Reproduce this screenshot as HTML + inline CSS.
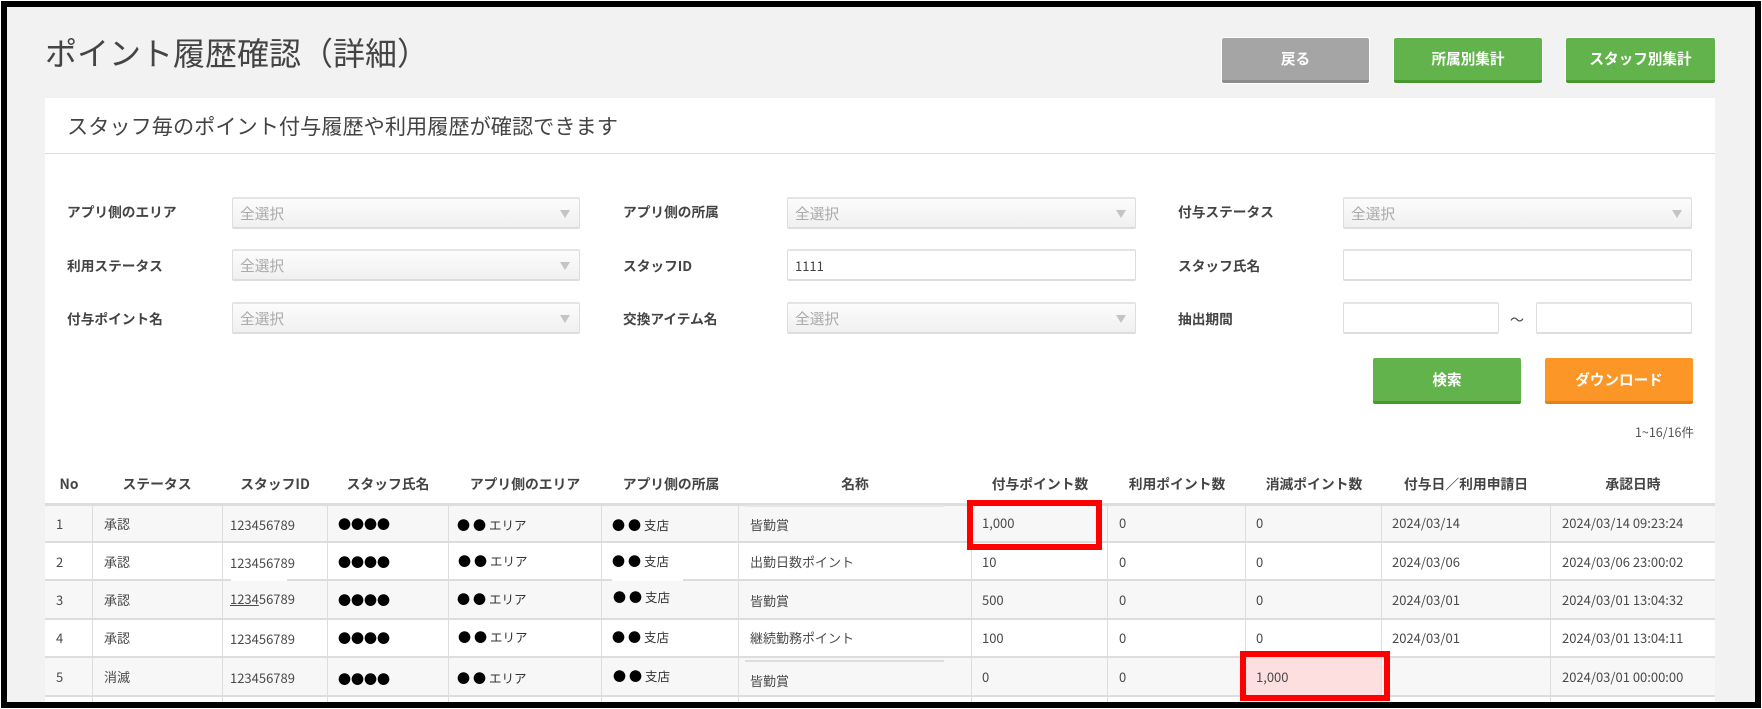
<!DOCTYPE html>
<html lang="ja"><head><meta charset="utf-8"><title>ポイント履歴確認（詳細）</title>
<style>
html,body{margin:0;padding:0;background:#fff}
#p{position:relative;width:1762px;height:709px;overflow:hidden;background:#fff;font-family:"Noto Sans CJK JP","Liberation Sans",sans-serif;color:#444}
#p div,#p span.a{position:absolute}
.t{white-space:nowrap;line-height:20px;font-size:13px;color:#4a4a4a}
.h{white-space:nowrap;line-height:20px;font-size:13.8px;font-weight:700;color:#444;transform:translateX(-50%)}
.l{white-space:nowrap;line-height:20px;font-size:13.7px;font-weight:700;color:#444}
.b{box-sizing:border-box;height:32px;border:1px solid #ddd;border-bottom:2px solid #ddd;border-top:2px solid #e4e4e4;border-radius:2px;background:#fff}
.s{background:linear-gradient(#fcfcfc,#f0f0f0)}
.s span{position:absolute;left:7px;top:4px;line-height:22px;font-size:14.7px;color:#aaa}
.s i{position:absolute;right:9px;top:11px;width:0;height:0;border-left:5.5px solid transparent;border-right:5.5px solid transparent;border-top:8px solid #c4c4c4}
.btn{box-sizing:border-box;text-align:center;color:#fff;font-weight:700;font-size:14.6px;border-radius:2px;border-bottom:3px solid;box-shadow:0 0 0 1px #fff}
.rl{left:45px;width:1670px;height:2px;background:#ddd}
.cl{top:505px;width:1px;height:197px;background:#ddd}
.d{color:#000;font-weight:700;font-size:13px}
.k{color:#000;font-size:13px;letter-spacing:3px}
.k small{font-size:12.5px;font-weight:400;color:#333;letter-spacing:0}
</style></head><body><div id="p">
<div style="left:1px;top:1px;width:1760px;height:707px;background:#000"></div>
<div style="left:7px;top:7px;width:1748px;height:695px;background:#f2f2f2;overflow:hidden"></div>

<div class="t" style="left:45px;top:32px;font-size:32px;line-height:40px;font-weight:400;color:#444">ポイント履歴確認（詳細）</div>

<div class="btn" style="left:1222px;top:38px;width:147px;height:45px;line-height:42px;background:#a5a5a5;border-color:#8c8c8c">戻る</div>
<div class="btn" style="left:1394px;top:38px;width:148px;height:45px;line-height:42px;background:#62b34c;border-color:#459a2e">所属別集計</div>
<div class="btn" style="left:1566px;top:38px;width:149px;height:45px;line-height:42px;background:#62b34c;border-color:#459a2e">スタッフ別集計</div>

<div style="left:45px;top:98px;width:1670px;height:604px;background:#fff"></div>
<div style="left:45px;top:153px;width:1670px;height:1px;background:#ddd"></div>
<div class="t" style="left:67px;top:113px;font-size:21.2px;line-height:26px;font-weight:400;color:#444">スタッフ毎のポイント付与履歴や利用履歴が確認できます</div>

<div class="l" style="left:67px;top:201px">アプリ側のエリア</div>
<div class="l" style="left:67px;top:255px">利用ステータス</div>
<div class="l" style="left:67px;top:308px">付与ポイント名</div>
<div class="l" style="left:623px;top:201px">アプリ側の所属</div>
<div class="l" style="left:623px;top:255px">スタッフID</div>
<div class="l" style="left:623px;top:308px">交換アイテム名</div>
<div class="l" style="left:1178px;top:201px">付与ステータス</div>
<div class="l" style="left:1178px;top:255px">スタッフ氏名</div>
<div class="l" style="left:1178px;top:308px">抽出期間</div>

<div class="b s" style="left:232px;top:197px;width:348px"><span>全選択</span><i></i></div>
<div class="b s" style="left:232px;top:249px;width:348px"><span>全選択</span><i></i></div>
<div class="b s" style="left:232px;top:302px;width:348px"><span>全選択</span><i></i></div>
<div class="b s" style="left:787px;top:197px;width:349px"><span>全選択</span><i></i></div>
<div class="b" style="left:787px;top:249px;width:349px"><div class="t" style="left:7px;top:4px;line-height:22px;font-size:13px;color:#444">1111</div></div>
<div class="b s" style="left:787px;top:302px;width:349px"><span>全選択</span><i></i></div>
<div class="b s" style="left:1343px;top:197px;width:349px"><span>全選択</span><i></i></div>
<div class="b" style="left:1343px;top:249px;width:349px"></div>
<div class="b" style="left:1343px;top:302px;width:156px"></div>
<div class="t" style="left:1510px;top:310px;font-size:14px;color:#444">～</div>
<div class="b" style="left:1536px;top:302px;width:156px"></div>

<div class="btn" style="left:1373px;top:358px;width:148px;height:46px;line-height:43px;background:#62b34c;border-color:#459a2e">検索</div>
<div class="btn" style="left:1545px;top:358px;width:148px;height:46px;line-height:43px;background:#fb9627;border-color:#e5801a">ダウンロード</div>
<div class="t" style="right:68px;top:422px;font-size:12.5px;color:#555">1~16/16件</div>

<div class="h" style="left:69px;top:473px">No</div>
<div class="h" style="left:157px;top:473px">ステータス</div>
<div class="h" style="left:275px;top:473px">スタッフID</div>
<div class="h" style="left:388px;top:473px">スタッフ氏名</div>
<div class="h" style="left:525px;top:473px">アプリ側のエリア</div>
<div class="h" style="left:671px;top:473px">アプリ側の所属</div>
<div class="h" style="left:855px;top:473px">名称</div>
<div class="h" style="left:1040px;top:473px">付与ポイント数</div>
<div class="h" style="left:1177px;top:473px">利用ポイント数</div>
<div class="h" style="left:1314px;top:473px">消滅ポイント数</div>
<div class="h" style="left:1466px;top:473px">付与日／利用申請日</div>
<div class="h" style="left:1633px;top:473px">承認日時</div>

<div style="left:45px;top:504px;width:1670px;height:38px;background:#f7f7f7"></div>
<div style="left:45px;top:581px;width:1670px;height:37px;background:#f7f7f7"></div>
<div style="left:45px;top:658px;width:1670px;height:38px;background:#f7f7f7"></div>
<div style="left:1245px;top:654px;width:137px;height:44px;background:#fddfe0"></div>
<div class="rl" style="top:503px;height:3px"></div>
<div class="rl" style="top:541px"></div>
<div class="rl" style="top:579px"></div>
<div class="rl" style="top:618px"></div>
<div class="rl" style="top:656px"></div>
<div class="rl" style="top:695px"></div>
<div class="cl" style="left:92px"></div>
<div class="cl" style="left:222px"></div>
<div class="cl" style="left:327px"></div>
<div class="cl" style="left:448px"></div>
<div class="cl" style="left:601px"></div>
<div class="cl" style="left:738px"></div>
<div class="cl" style="left:971px"></div>
<div class="cl" style="left:1107px"></div>
<div class="cl" style="left:1245px"></div>
<div class="cl" style="left:1381px"></div>
<div class="cl" style="left:1550px"></div>
<div style="left:612px;top:579px;width:71px;height:2px;background:#fff"></div>
<div style="left:231px;top:579px;width:56px;height:2px;background:#fff"></div>
<div style="left:745px;top:505px;width:199px;height:2px;background:#e6e6e6"></div>
<div style="left:745px;top:660px;width:199px;height:2px;background:#ddd"></div>
<div style="left:745px;top:662px;width:199px;height:33px;background:#f7f7f7"></div>
<div style="left:745px;top:697px;width:199px;height:5px;background:#fff"></div>

<div class="t" style="left:56px;top:514px">1</div><div class="t" style="left:104px;top:514px">承認</div><div class="t" style="left:230px;top:515px">123456789</div><div class="t d" style="left:338px;top:514px">●●●●</div><div class="t k" style="left:457px;top:515px">●●<small>エリア</small></div><div class="t k" style="left:612px;top:515px">●●<small>支店</small></div><div class="t" style="left:750px;top:515px">皆勤賞</div><div class="t" style="left:982px;top:513px">1,000</div><div class="t" style="left:1119px;top:513px">0</div><div class="t" style="left:1256px;top:513px">0</div><div class="t" style="left:1392px;top:513px">2024/03/14</div><div class="t" style="left:1562px;top:513px">2024/03/14 09:23:24</div>

<div class="t" style="left:56px;top:552px">2</div><div class="t" style="left:104px;top:552px">承認</div><div class="t" style="left:230px;top:553px">123456789</div><div class="t d" style="left:338px;top:552px">●●●●</div><div class="t k" style="left:458px;top:551px">●●<small>エリア</small></div><div class="t k" style="left:612px;top:551px">●●<small>支店</small></div><div class="t" style="left:750px;top:552px">出勤日数ポイント</div><div class="t" style="left:982px;top:552px">10</div><div class="t" style="left:1119px;top:552px">0</div><div class="t" style="left:1256px;top:552px">0</div><div class="t" style="left:1392px;top:552px">2024/03/06</div><div class="t" style="left:1562px;top:552px">2024/03/06 23:00:02</div>

<div class="t" style="left:56px;top:590px">3</div><div class="t" style="left:104px;top:590px">承認</div><div class="t" style="left:230px;top:589px"><u>1234</u>56789</div><div class="t d" style="left:338px;top:590px">●●●●</div><div class="t k" style="left:457px;top:589px">●●<small>エリア</small></div><div class="t k" style="left:613px;top:587px">●●<small>支店</small></div><div class="t" style="left:750px;top:591px">皆勤賞</div><div class="t" style="left:982px;top:590px">500</div><div class="t" style="left:1119px;top:590px">0</div><div class="t" style="left:1256px;top:590px">0</div><div class="t" style="left:1392px;top:590px">2024/03/01</div><div class="t" style="left:1562px;top:590px">2024/03/01 13:04:32</div>

<div class="t" style="left:56px;top:628px">4</div><div class="t" style="left:104px;top:628px">承認</div><div class="t" style="left:230px;top:629px">123456789</div><div class="t d" style="left:338px;top:628px">●●●●</div><div class="t k" style="left:458px;top:627px">●●<small>エリア</small></div><div class="t k" style="left:612px;top:627px">●●<small>支店</small></div><div class="t" style="left:750px;top:628px">継続勤務ポイント</div><div class="t" style="left:982px;top:628px">100</div><div class="t" style="left:1119px;top:628px">0</div><div class="t" style="left:1256px;top:628px">0</div><div class="t" style="left:1392px;top:628px">2024/03/01</div><div class="t" style="left:1562px;top:628px">2024/03/01 13:04:11</div>

<div class="t" style="left:56px;top:667px">5</div><div class="t" style="left:104px;top:667px">消滅</div><div class="t" style="left:230px;top:668px">123456789</div><div class="t d" style="left:338px;top:669px">●●●●</div><div class="t k" style="left:457px;top:668px">●●<small>エリア</small></div><div class="t k" style="left:613px;top:666px">●●<small>支店</small></div><div class="t" style="left:750px;top:671px">皆勤賞</div><div class="t" style="left:982px;top:667px">0</div><div class="t" style="left:1119px;top:667px">0</div><div class="t" style="left:1256px;top:667px">1,000</div><div class="t" style="left:1562px;top:667px">2024/03/01 00:00:00</div>

<div style="box-sizing:border-box;left:967px;top:500px;width:135px;height:50px;border:6px solid #f00"></div>
<div style="box-sizing:border-box;left:1240px;top:651px;width:150px;height:50px;border:6px solid #f00"></div>
</div></body></html>
